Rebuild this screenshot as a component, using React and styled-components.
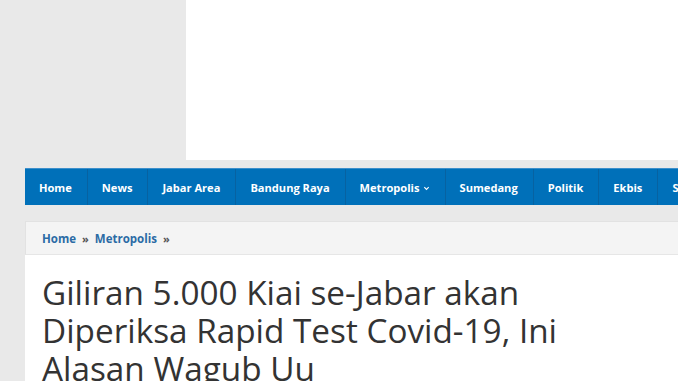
import styled, { createGlobalStyle } from "styled-components";

const GlobalStyle = createGlobalStyle`
  html, body {
    margin: 0;
    padding: 0;
    background: #e9e9e9;
    overflow: hidden;
    font-family: "Open Sans", "Liberation Sans", sans-serif;
  }
`;

const Page = styled.div`
  width: 1100px;
  display: flex;
  flex-direction: column;
`;

const AdRow = styled.div`
  display: flex;
  height: 160px;
  padding-left: 186px;
`;

const AdBox = styled.div`
  width: 728px;
  background: #ffffff;
`;

const Wrap = styled.div`
  margin: 8px 0 0 25px;
  display: flex;
  flex-direction: column;
`;

const Nav = styled.ul`
  display: flex;
  margin: 0;
  padding: 0;
  list-style: none;
  background: #0070b9;
  border-top: 1px solid #3d8fcb;
  height: 36px;
`;

const NavItem = styled.li`
  display: flex;
  align-items: center;
  gap: 3px;
  padding: 0 15px 0 14px;
  border-right: 1px solid #0762a1;
  color: #ffffff;
  font-size: 11.1px;
  font-weight: 700;
  white-space: nowrap;
`;

const Caret = styled.svg`
  width: 7px;
  height: 7px;
  margin-top: 2px;
`;

const Crumbs = styled.div`
  margin-top: 16px;
  height: 32px;
  display: flex;
  align-items: center;
  gap: 6px;
  padding-left: 16px;
  background: #f4f4f4;
  border: 1px solid #e2e2e2;
  border-bottom-color: #e6e6e6;
`;

const CrumbLink = styled.span`
  color: #2b6ba5;
  font-size: 11.5px;
  font-weight: 700;
`;

const Sep = styled.span`
  color: #555555;
  font-size: 11px;
  font-weight: 700;
`;

const Content = styled.div`
  background: #ffffff;
  padding: 18px 17px;
`;

const Title = styled.h1`
  margin: 0;
  width: 600px;
  font-size: 33.3px;
  font-weight: 400;
  line-height: 38px;
  color: #333333;
`;

const items = [
  "Home",
  "News",
  "Jabar Area",
  "Bandung Raya",
  "Metropolis",
  "Sumedang",
  "Politik",
  "Ekbis",
  "Sport",
];

export default function App() {
  return (
    <>
      <GlobalStyle />
      <Page>
        <AdRow>
          <AdBox />
        </AdRow>
        <Wrap>
          <Nav>
            {items.map((label) => (
              <NavItem key={label}>
                {label}
                {label === "Metropolis" && (
                  <Caret viewBox="0 0 8 8">
                    <path d="M1.5 2.5 L4 5 L6.5 2.5" fill="none" stroke="#fff" strokeWidth="1.3" />
                  </Caret>
                )}
              </NavItem>
            ))}
          </Nav>
          <Crumbs>
            <CrumbLink>Home</CrumbLink>
            <Sep>»</Sep>
            <CrumbLink>Metropolis</CrumbLink>
            <Sep>»</Sep>
          </Crumbs>
          <Content>
            <Title>Giliran 5.000 Kiai se-Jabar akan Diperiksa Rapid Test Covid-19, Ini Alasan Wagub Uu</Title>
          </Content>
        </Wrap>
      </Page>
    </>
  );
}
